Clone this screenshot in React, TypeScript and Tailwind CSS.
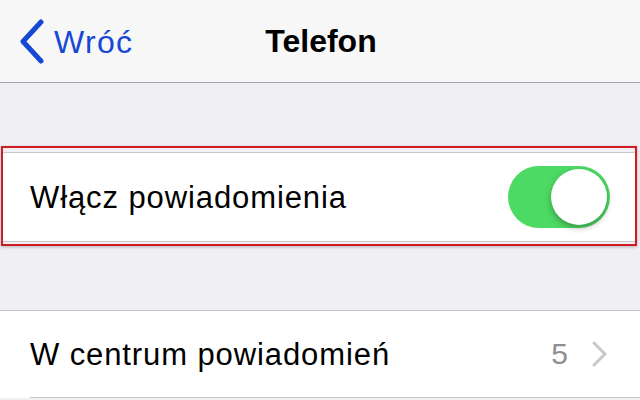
import React from "react";

export default function App() {
  return (
    <div className="w-[640px] h-[400px] overflow-hidden bg-[#efeff4] font-['Liberation_Sans',Arial,sans-serif]">
      {/* Nav bar */}
      <div className="h-[83px] bg-[#f7f7f7] border-b border-[#a6a6aa] grid grid-cols-[1fr_auto_1fr] items-center">
        <div className="flex items-center pl-[19px] gap-[10px] text-[#1549d4]">
          <svg width="25" height="45" viewBox="0 0 25 45" fill="none">
            <polyline points="22,3 4,22.5 22,42" stroke="#1549d4" strokeWidth="5" strokeLinecap="round" strokeLinejoin="round" />
          </svg>
          <span className="text-[32px] tracking-[1.3px] leading-none pt-[1px]">Wróć</span>
        </div>
        <div className="text-[32px] font-bold text-black leading-none pl-[2px]">Telefon</div>
        <div />
      </div>

      {/* Highlighted row */}
      <div className="mt-[63px] ml-[1px] w-[636px] border-[2.5px] border-[#cf1b22] pt-[4px] pb-[2px] shadow-[0_1px_3px_rgba(0,0,0,0.25)]">
        <div className="h-[90px] bg-white border-y border-[#c8c7cc] flex items-center justify-between pl-[27px] pr-[25px]">
          <span className="text-[31px] tracking-[0.9px] text-black leading-none">Włącz powiadomienia</span>
          <div className="relative w-[102px] h-[62px] rounded-full bg-[#4cd964]">
            <div className="absolute right-[3px] top-[3px] w-[56px] h-[56px] rounded-full bg-white shadow-[0_3px_6px_rgba(0,0,0,0.3)]" />
          </div>
        </div>
      </div>

      {/* Second row */}
      <div className="mt-[64px] bg-white border-t border-[#c8c7cc]">
        <div className="h-[86px] flex items-center justify-between pl-[30px] pr-[32px]">
          <span className="text-[31px] tracking-[0.9px] text-black leading-none">W centrum powiadomień</span>
          <div className="flex items-center gap-[24px]">
            <span className="text-[30px] text-[#8e8e93] leading-none">5</span>
            <svg width="16" height="26" viewBox="0 0 16 26" fill="none">
              <polyline points="2,2 13,13 2,24" stroke="#c7c7cc" strokeWidth="3" strokeLinecap="round" strokeLinejoin="round" />
            </svg>
          </div>
        </div>
        <div className="ml-[30px] h-px bg-[#c8c7cc]" />
      </div>
    </div>
  );
}
